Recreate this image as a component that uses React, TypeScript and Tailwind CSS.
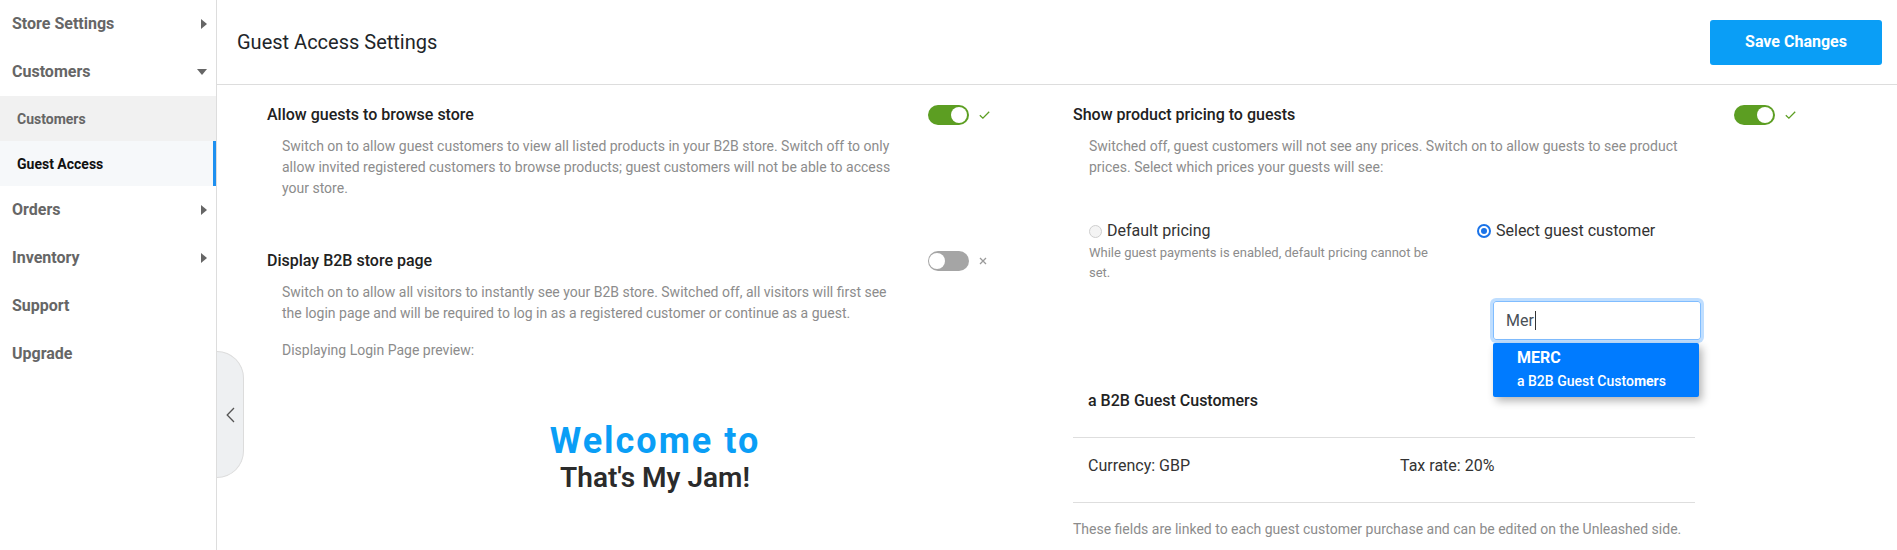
import React from "react";

const CaretRight = () => (
  <svg width="6" height="10" viewBox="0 0 6 10" className="block">
    <path d="M0 0 L6 5 L0 10 Z" fill="#666" />
  </svg>
);

const CaretDown = () => (
  <svg width="10" height="6" viewBox="0 0 10 6" className="block">
    <path d="M0 0 L10 0 L5 6 Z" fill="#666" />
  </svg>
);

const Toggle = ({ on }: { on: boolean }) => (
  <div className="flex items-center gap-[10px]">
    <div className={on ? "relative h-5 w-[41px] rounded-full bg-[#5c9e22]" : "relative h-5 w-[41px] rounded-full bg-[#a5a5a5]"}>
      <div className={on ? "absolute right-[2px] top-[2px] h-4 w-4 rounded-full bg-white" : "absolute left-[1px] top-[2px] h-4 w-4 rounded-full bg-white"} />
    </div>
    <div className="flex w-[11px] justify-start">
      {on ? (
        <svg width="11" height="8" viewBox="0 0 11 8">
          <path d="M0.8 4.2 L3.9 7.1 L10.2 0.8" fill="none" stroke="#5c9e22" strokeWidth="1.3" />
        </svg>
      ) : (
        <svg width="8" height="8" viewBox="0 0 8 8">
          <path d="M1 1 L7 7 M7 1 L1 7" fill="none" stroke="#9a9a9a" strokeWidth="1.3" />
        </svg>
      )}
    </div>
  </div>
);

const NavItem = ({ label, caret }: { label: string; caret?: "right" | "down" }) => (
  <div className="flex h-12 items-center justify-between pl-3 pr-[9px] text-base font-bold text-[#666]">
    <span>{label}</span>
    {caret === "right" && <CaretRight />}
    {caret === "down" && <CaretDown />}
  </div>
);

const App = () => {
  return (
    <div className="flex h-[550px] w-full overflow-hidden bg-white font-['Roboto','Liberation_Sans',sans-serif]">
      {/* sidebar */}
      <aside className="w-[216px] shrink-0">
        <NavItem label="Store Settings" caret="right" />
        <NavItem label="Customers" caret="down" />
        <div className="flex h-[45px] items-center bg-[#f1f1f1] pl-[17px] text-sm font-bold text-[#666]">Customers</div>
        <div className="flex h-[45px] items-center border-r-[3px] border-[#1e90f0] bg-[#f6f8fa] pl-[17px] text-sm font-bold text-[#111]">
          Guest Access
        </div>
        <NavItem label="Orders" caret="right" />
        <NavItem label="Inventory" caret="right" />
        <NavItem label="Support" />
        <NavItem label="Upgrade" />
      </aside>

      {/* main */}
      <main className="flex flex-1 flex-col border-l border-[#dddddd]">
        <header className="flex h-[85px] shrink-0 items-center justify-between border-b border-[#dddddd] pl-5 pr-[15px]">
          <h1 className="text-[20px] font-normal text-[#212529]">Guest Access Settings</h1>
          <button className="h-[45px] w-[172px] rounded-[3px] bg-[#0a9ef6] text-base font-bold text-white">Save Changes</button>
        </header>

        <div className="relative flex-1">
          {/* collapse tab */}
          <div className="absolute left-0 top-[266px] flex h-[127px] w-[27px] items-center justify-center rounded-r-[28px] border border-l-0 border-[#dcdcdc] bg-[#eef0f2]">
            <svg width="9" height="16" viewBox="0 0 9 16">
              <path d="M8 1 L1.2 8 L8 15" fill="none" stroke="#555" strokeWidth="1.3" />
            </svg>
          </div>

          <div className="grid grid-cols-[723px_723px] gap-x-[83px] pl-[50px] pt-5">
            {/* left column */}
            <div>
              <div className="flex h-5 items-center justify-between">
                <h3 className="text-base font-medium text-[#212121]">Allow guests to browse store</h3>
                <Toggle on />
              </div>
              <p className="mt-[11px] w-[642px] pl-[15px] text-sm leading-[21px] text-[#8c8c8c]">
                Switch on to allow guest customers to view all listed products in your B2B store. Switch off to only allow invited registered customers to browse products; guest customers will not be able to access your store.
              </p>

              <div className="mt-[52px] flex h-5 items-center justify-between">
                <h3 className="text-base font-medium text-[#212121]">Display B2B store page</h3>
                <Toggle on={false} />
              </div>
              <p className="mt-[11px] w-[635px] pl-[15px] text-sm leading-[21px] text-[#8c8c8c]">
                Switch on to allow all visitors to instantly see your B2B store. Switched off, all visitors will first see the login page and will be required to log in as a registered customer or continue as a guest.
              </p>
              <p className="mt-4 pl-[15px] text-sm leading-[21px] text-[#8c8c8c]">Displaying Login Page preview:</p>

              <div className="mt-[62px] flex flex-col items-center pl-[53px]">
                <div className="text-[36px] font-bold leading-none tracking-[2px] text-[#0a9ef6]">Welcome to</div>
                <div className="mt-[5px] text-[28px] font-semibold leading-none text-[#2b2b2b]">That's My Jam!</div>
              </div>
            </div>

            {/* right column */}
            <div>
              <div className="flex h-5 items-center justify-between">
                <h3 className="text-base font-medium text-[#212121]">Show product pricing to guests</h3>
                <Toggle on />
              </div>
              <p className="mt-[11px] w-[620px] pl-4 text-sm leading-[21px] text-[#8c8c8c]">
                Switched off, guest customers will not see any prices. Switch on to allow guests to see product prices. Select which prices your guests will see:
              </p>

              <div className="mt-[41px] flex pl-4">
                <div className="w-[388px] pr-[40px]">
                  <label className="flex h-6 items-center gap-[5px] text-base text-[#333]">
                    <span className="h-[13px] w-[13px] rounded-full border border-[#cfcfcf] bg-[#f4f4f4]" />
                    Default pricing
                  </label>
                  <p className="text-[13px] leading-5 text-[#8c8c8c]">
                    While guest payments is enabled, default pricing cannot be set.
                  </p>
                </div>
                <label className="flex h-6 items-center gap-[5px] text-base text-[#333]">
                  <span className="flex h-[14px] w-[14px] items-center justify-center rounded-full border-2 border-[#1a73e8] bg-white">
                    <span className="h-[6px] w-[6px] rounded-full bg-[#1a73e8]" />
                  </span>
                  Select guest customer
                </label>
              </div>

              <div className="relative ml-[420px] mt-[18px] w-[208px]">
                <div className="flex h-[39px] items-center rounded-[3px] border border-[#80bdff] px-3 text-base text-[#495057] shadow-[0_0_0_3px_rgba(0,123,255,0.25)]">
                  Mer<span className="ml-[1px] h-[19px] w-px bg-[#333]" />
                </div>
                <div className="absolute left-0 top-[42px] z-10 w-[206px] rounded-[2px] bg-[#007bff] pb-[6px] pl-6 pt-[5px] text-white shadow-[3px_4px_8px_rgba(0,0,0,0.3)]">
                  <div className="text-base font-bold leading-5">MERC</div>
                  <div className="mt-[3px] text-sm font-medium leading-5">
                    a B2B Guest Custo<span className="font-bold">mer</span>s
                  </div>
                </div>
              </div>

              <div className="w-[622px]">
                <div className="mt-[49px] pl-[15px] text-base font-medium leading-6 text-[#222]">a B2B Guest Customers</div>
                <div className="mt-[24px] flex border-y border-[#dedede] pb-[24px] pl-[15px] pt-[16px] text-base leading-6 text-[#333]">
                  <span className="w-[312px]">Currency: GBP</span>
                  <span>Tax rate: 20%</span>
                </div>
                <p className="mt-4 text-sm leading-[21px] text-[#8c8c8c]">
                  These fields are linked to each guest customer purchase and can be edited on the Unleashed side.
                </p>
              </div>
            </div>
          </div>
        </div>
      </main>
    </div>
  );
};

export default App;
